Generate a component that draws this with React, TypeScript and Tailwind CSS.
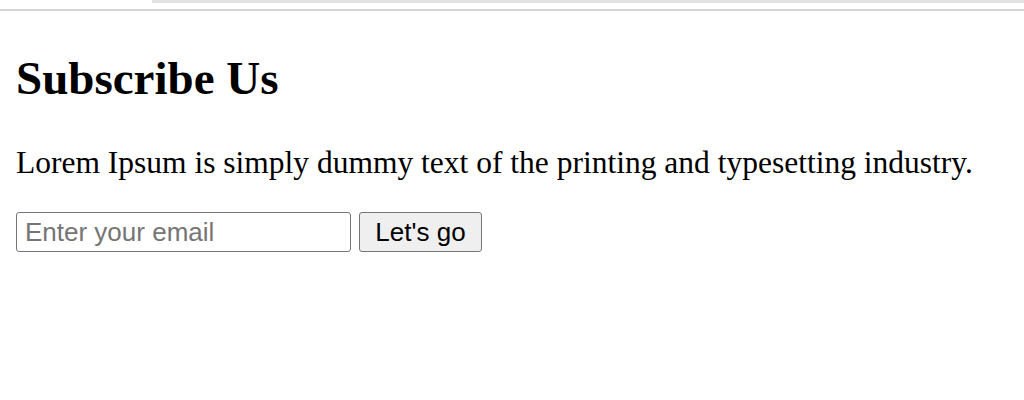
export default function App() {
  return (
    <div className="w-[1024px] h-[400px] bg-white overflow-hidden">
      {/* browser chrome strip */}
      <div className="h-[3px] ml-[152px] bg-[#e3e3e3]" />
      <div className="h-[6px]" />
      <div className="h-[2px] bg-[#d3d3d3]" />

      <div className="px-4 font-['Liberation_Serif',serif] text-black">
        <h1 className="mt-[39px] text-[47px] leading-[56px] font-bold">Subscribe Us</h1>
        <p className="mt-[39px] text-[31.5px] leading-[36px]">
          Lorem Ipsum is simply dummy text of the printing and typesetting industry.
        </p>

        <form className="mt-[31px] flex items-center gap-2 font-['Liberation_Sans',sans-serif]">
          <input
            type="email"
            placeholder="Enter your email"
            className="w-[335px] h-[40px] px-2 text-[26px] border border-[#767676] rounded-[3px] placeholder:text-[#757575] outline-none"
          />
          <button
            type="button"
            className="w-[123px] h-[40px] text-[26px] bg-[#efefef] border border-[#767676] rounded-[3px]"
          >
            Let's go
          </button>
        </form>
      </div>
    </div>
  );
}
